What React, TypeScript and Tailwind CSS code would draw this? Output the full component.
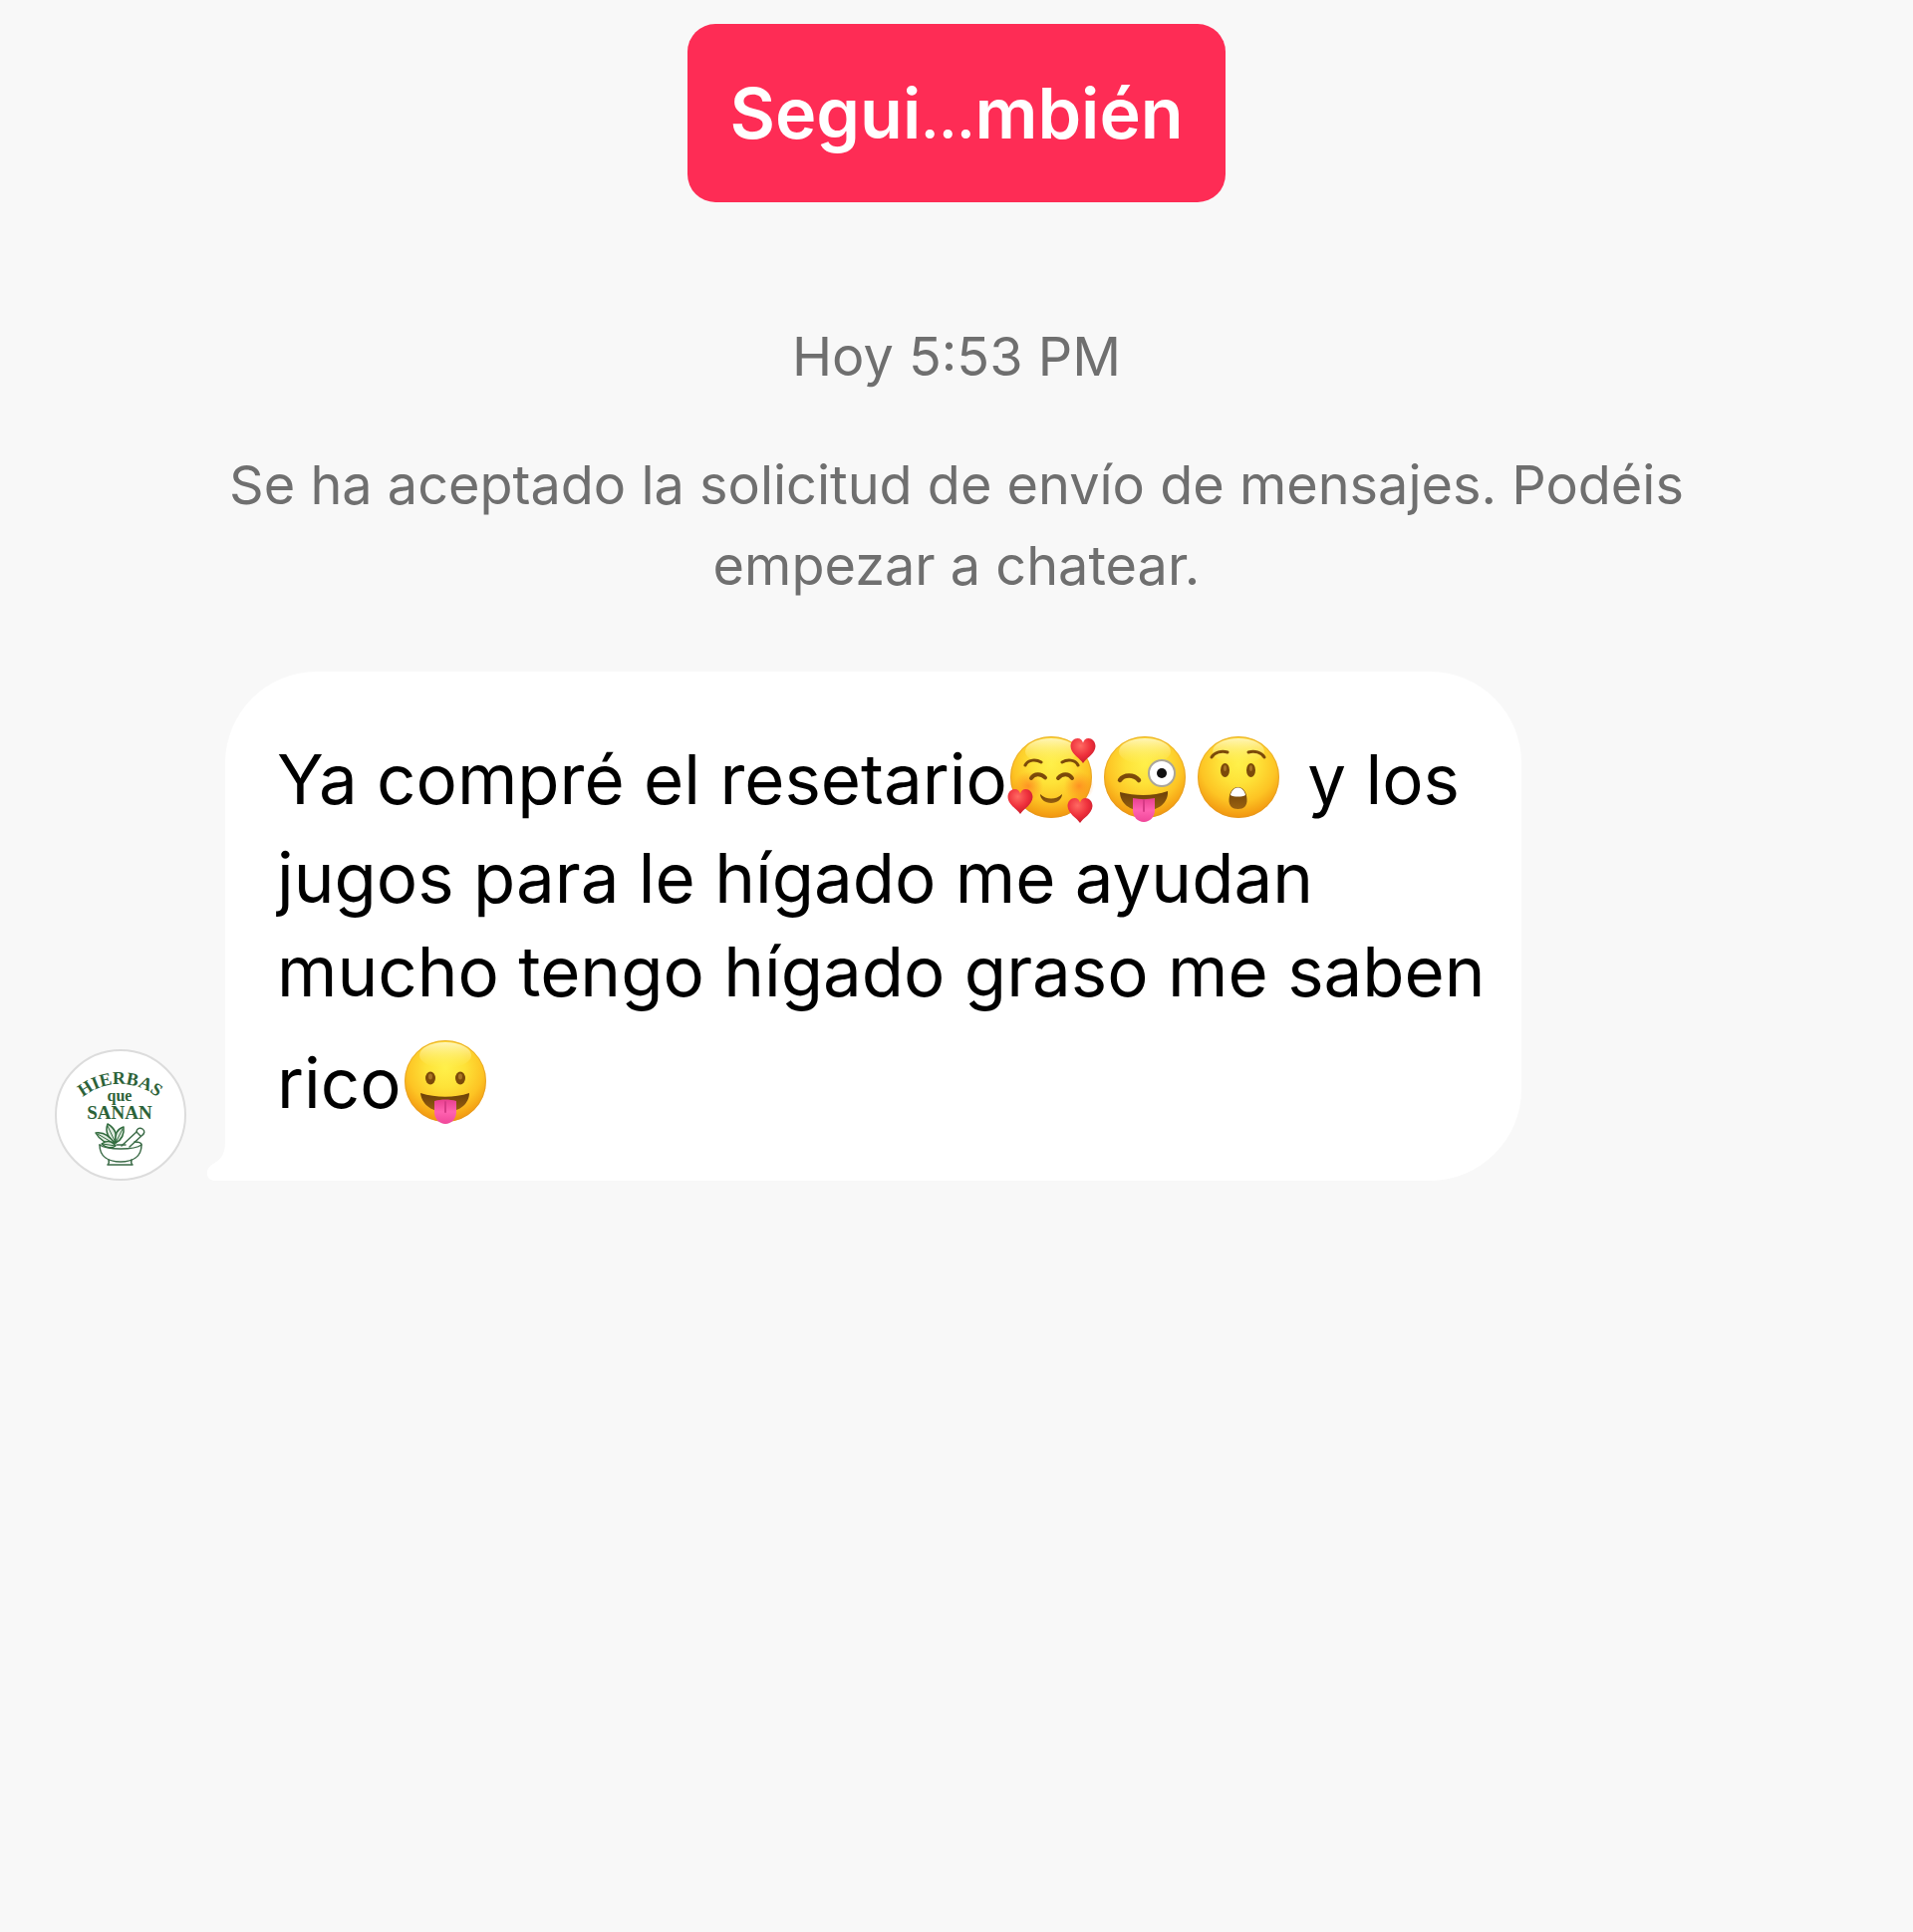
import type { ReactNode } from "react";

function EmojiDefs() {
  return (
    <svg width="0" height="0" className="absolute" aria-hidden="true">
      <defs>
        <radialGradient id="face" cx="0.5" cy="0.34" r="0.68">
          <stop offset="0" stopColor="#fff04a" />
          <stop offset="0.35" stopColor="#fee238" />
          <stop offset="0.68" stopColor="#fdc424" />
          <stop offset="1" stopColor="#f08f0c" />
        </radialGradient>
        <linearGradient id="shine" x1="0" y1="0" x2="0" y2="1">
          <stop offset="0" stopColor="#fffbd0" stopOpacity="0.85" />
          <stop offset="1" stopColor="#fff36b" stopOpacity="0" />
        </linearGradient>
        <radialGradient id="blush" cx="0.5" cy="0.5" r="0.5">
          <stop offset="0" stopColor="#ff7a1f" stopOpacity="0.7" />
          <stop offset="1" stopColor="#ff8a1f" stopOpacity="0" />
        </radialGradient>
        <radialGradient id="heart" cx="0.4" cy="0.3" r="0.7">
          <stop offset="0" stopColor="#ff6a62" />
          <stop offset="0.6" stopColor="#ee2f3b" />
          <stop offset="1" stopColor="#c81e2e" />
        </radialGradient>
        <linearGradient id="tongue" x1="0" y1="0" x2="0" y2="1">
          <stop offset="0" stopColor="#e8408f" />
          <stop offset="0.5" stopColor="#ff62b0" />
          <stop offset="1" stopColor="#f0479a" />
        </linearGradient>
        <linearGradient id="mouth" x1="0" y1="0" x2="0" y2="1">
          <stop offset="0" stopColor="#6b3f08" />
          <stop offset="1" stopColor="#9a6210" />
        </linearGradient>
        <path
          id="heart-shape"
          d="M0 13C-3 8-12 4-12.500-4C-12.500-9-9-12-5.500-12C-2.500-12-.7-10 0-7.500C.7-10 2.500-12 5.500-12C9-12 12.500-9 12.500-4C12 4 3 8 0 13Z"
        />
      </defs>
    </svg>
  );
}

function Emoji({ label, children }: { label: string; children: ReactNode }) {
  return (
    <svg
      role="img"
      aria-label={label}
      viewBox="0 0 94 117"
      className="inline-block h-[117px] w-[94px] align-[-27px]"
    >
      <circle cx="44" cy="63" r="41" fill="url(#face)" />
      <ellipse cx="44" cy="37" rx="26" ry="13" fill="url(#shine)" />
      <circle cx="44" cy="63" r="40.500" fill="none" stroke="#dd9a2a" strokeOpacity="0.6" />
      <g transform="translate(-3 -1)">{children}</g>
    </svg>
  );
}

function SmilingWithHearts() {
  return (
    <Emoji label="🥰">
      <circle cx="24" cy="73" r="15" fill="url(#blush)" />
      <circle cx="75" cy="73" r="15" fill="url(#blush)" />
      <g fill="none" stroke="#7c4a0a" strokeLinecap="round">
        <path d="M21 52C24 46 32 46 37 49" strokeWidth="3" />
        <path d="M58 49C63 46 71 46 74 52" strokeWidth="3" />
        <path d="M27 65C30 60 37 60 41 64.500" strokeWidth="4" />
        <path d="M54 65C58 60 65 60 68 65" strokeWidth="4" />
      </g>
      <path d="M36 81C42 87 52 87 58 81C58 86 53 90 47 90C41 90 36 86 36 81Z" fill="url(#mouth)" />
      <use href="#heart-shape" x="79" y="37" fill="url(#heart)" />
      <use href="#heart-shape" x="16" y="88" fill="url(#heart)" />
      <use href="#heart-shape" x="76" y="97" fill="url(#heart)" />
    </Emoji>
  );
}

function WinkingTongue() {
  return (
    <Emoji label="🤪">
      <path d="M22 67C26 61 36 61 41 67" fill="none" stroke="#7c4a0a" strokeWidth="4.500" strokeLinecap="round" />
      <circle cx="64" cy="60" r="13" fill="#fff" stroke="#aaa59a" strokeWidth="2" />
      <circle cx="64" cy="60" r="5" fill="#111" />
      <path d="M22 79C38 83 56 83 70 78C71 89 61 98 46 98C32 98 22 90 22 79Z" fill="url(#mouth)" />
      <path d="M35 85C42 86.500 50 86.500 57 85V97C57 104 52 109 46 109C40 109 35 104 35 97Z" fill="url(#tongue)" />
      <path d="M46 87V98" stroke="#d63a86" strokeWidth="2" strokeLinecap="round" />
    </Emoji>
  );
}

function Astonished() {
  return (
    <Emoji label="😲">
      <g fill="none" stroke="#7c4a0a" strokeWidth="3" strokeLinecap="round">
        <path d="M20 44C23 39 30 37 36 39" />
        <path d="M57 39C63 37 70 39 73 44" />
      </g>
      <ellipse cx="33.500" cy="57" rx="4.500" ry="7" fill="#7c4a0a" />
      <ellipse cx="59.500" cy="57" rx="4.500" ry="7" fill="#7c4a0a" />
      <ellipse cx="33.500" cy="55" rx="1.500" ry="3" fill="#a87426" />
      <ellipse cx="59.500" cy="55" rx="1.500" ry="3" fill="#a87426" />
      <path d="M46.500 74C52 74 55 79 55.500 86C56 93 52 96 46.500 96C41 96 37 93 37.500 86C38 79 41 74 46.500 74Z" fill="url(#mouth)" />
      <path d="M39 82C40 77 43 74.500 46.500 74.500C50 74.500 53 77 54 82C51 84 42 84 39 82Z" fill="#fff" />
    </Emoji>
  );
}

function FaceWithTongue() {
  return (
    <Emoji label="😛">
      <ellipse cx="32" cy="61" rx="5" ry="6.500" fill="#7c4a0a" />
      <ellipse cx="62" cy="61" rx="5" ry="6.500" fill="#7c4a0a" />
      <ellipse cx="32" cy="59.500" rx="2" ry="3" fill="#a87426" />
      <ellipse cx="62" cy="59.500" rx="2" ry="3" fill="#a87426" />
      <path d="M22 76C38 81 56 81 71 76C71 86 62 95 47 95C32 95 23 86 22 76Z" fill="url(#mouth)" />
      <path d="M36 84C43 82 51 82 58 84V95C58 102 53 107 47 107C41 107 36 102 36 95Z" fill="url(#tongue)" />
      <path d="M47 85V95" stroke="#d63a86" strokeWidth="2" strokeLinecap="round" />
    </Emoji>
  );
}

function Avatar() {
  return (
    <svg
      role="img"
      aria-label="Hierbas que Sanan"
      viewBox="0 0 132 132"
      className="size-[132px] shrink-0"
    >
      <circle cx="66" cy="66" r="65" fill="#fff" stroke="#dcdcdc" strokeWidth="2" />
      <defs>
        <path id="logo-arc" d="M24 52A59 59 0 0 1 107 52" />
      </defs>
      <g fill="#2c6238" fontFamily="Liberation Serif, serif" fontWeight="700" textAnchor="middle">
        <text fontSize="18">
          <textPath href="#logo-arc" startOffset="50%">HIERBAS</textPath>
        </text>
        <text x="65" y="52" fontSize="16">que</text>
        <text x="65" y="70" fontSize="19">SANAN</text>
      </g>
      <g fill="none" stroke="#3b6b47" strokeWidth="1.500" strokeLinecap="round" strokeLinejoin="round">
        <path d="M45 96C45 108 54 113 66 113C78 113 87 108 87 96" />
        <path d="M45 96C49 99 56 100 66 100C76 100 83 99 87 96C87 94 84 93 80 93" />
        <path d="M54 111C55 114 54 115 53 116H78C77 115 76 114 77 111" />
        <path d="M62 96H71" />
        <path d="M67 97L82 83C82 80 85 78 88 80C91 82 90 85 87 87L75 98" />
        <path d="M82 83L86 87" />
      </g>
      <g fill="#dfeadf" stroke="#2f6a3c" strokeWidth="1.500" strokeLinejoin="round">
        <path d="M61 94C54 90 50 83 53 75C60 79 63 86 61 94Z" />
        <path d="M61 94C60 86 62 80 69 78C70 86 67 91 61 94Z" />
        <path d="M60 95C54 85 48 83 41 84C45 91 51 95 60 95Z" />
        <path d="M61 97C56 91 51 92 47 95C51 99 57 100 61 97Z" />
        <path d="M53 77L61 94M68 80L61 94M43 85L60 95M48 95L61 97" fill="none" strokeWidth="1" />
      </g>
    </svg>
  );
}

export default function App() {
  return (
    <main className="flex min-h-screen flex-col bg-[#f8f8f8] pt-6 font-['Inter',sans-serif]">
      <EmojiDefs />
      <button
        type="button"
        className="self-center rounded-[28px] bg-[#fe2c55] px-[42px] py-11 text-[70px] leading-[91px] font-semibold text-white"
      >
        Segui<span className="text-[54px] leading-none font-bold">…</span>mbién
      </button>

      <div className="mt-[114px] flex flex-col gap-12 px-[200px] text-center text-[54px] leading-[81px] text-[#6f6f6f]">
        <time>Hoy 5:53 PM</time>
        <p>Se ha aceptado la solicitud de envío de mensajes. Podéis empezar a chatear.</p>
      </div>

      <div className="mt-[66px] flex items-end gap-[39px] px-[55px]">
        <Avatar />
        <div className="relative max-w-[1301px] rounded-[92px] rounded-bl-none bg-white pt-[43px] pr-8 pb-[46px] pl-[52px] text-[69px] leading-[94px] text-black">
          <svg
            aria-hidden="true"
            viewBox="0 0 20 40"
            className="absolute bottom-0 -left-[18px] h-10 w-5"
          >
            <path d="M20 0H18C18 12 15 18 6 23C-3 28-2 40 8 40H20Z" fill="#fff" />
          </svg>
          <p>
            Ya compré el resetario
            <SmilingWithHearts />
            <WinkingTongue />
            <Astonished /> y los jugos para le hígado me ayudan mucho tengo hígado graso me saben rico
            <FaceWithTongue />
          </p>
        </div>
      </div>
    </main>
  );
}
